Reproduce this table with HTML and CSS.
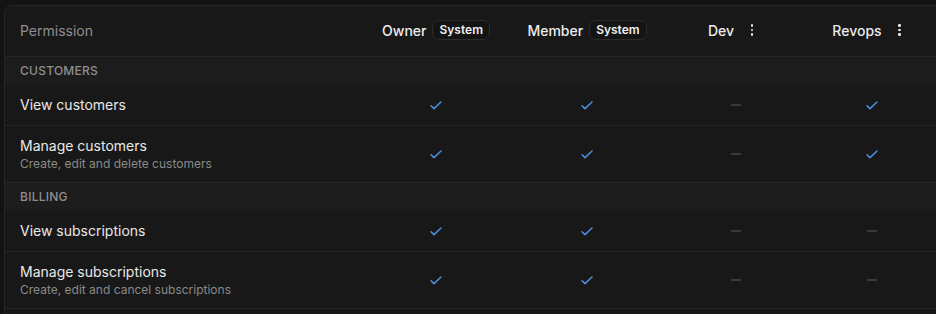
FILE: index.html
```html
<!DOCTYPE html>
<html lang="en">
<head>
<meta charset="utf-8">
<link rel="stylesheet" href="styles.css">
</head>
<body>
<div class="card">
  <div class="row head">
    <div class="cell perm muted">Permission</div>
    <div class="cell col"><span>Owner</span><span class="badge">System</span></div>
    <div class="cell col"><span>Member</span><span class="badge">System</span></div>
    <div class="cell col"><span>Dev</span><span class="kebab"><i></i><i></i><i></i></span></div>
    <div class="cell col"><span>Revops</span><span class="kebab"><i></i><i></i><i></i></span></div>
    <div class="cell"></div>
  </div>

  <div class="section">CUSTOMERS</div>
  <div class="row item">
    <div class="cell perm"><div class="title">View customers</div></div>
    <div class="cell col"><svg class="check" viewBox="0 0 12 9"><path d="M1 4.8 L4 7.6 L11 1"/></svg></div>
    <div class="cell col"><svg class="check" viewBox="0 0 12 9"><path d="M1 4.8 L4 7.6 L11 1"/></svg></div>
    <div class="cell col"><span class="dash"></span></div>
    <div class="cell col"><svg class="check" viewBox="0 0 12 9"><path d="M1 4.8 L4 7.6 L11 1"/></svg></div>
    <div class="cell"></div>
  </div>
  <div class="row item tall">
    <div class="cell perm"><div class="title">Manage customers</div><div class="desc">Create, edit and delete customers</div></div>
    <div class="cell col"><svg class="check" viewBox="0 0 12 9"><path d="M1 4.8 L4 7.6 L11 1"/></svg></div>
    <div class="cell col"><svg class="check" viewBox="0 0 12 9"><path d="M1 4.8 L4 7.6 L11 1"/></svg></div>
    <div class="cell col"><span class="dash"></span></div>
    <div class="cell col"><svg class="check" viewBox="0 0 12 9"><path d="M1 4.8 L4 7.6 L11 1"/></svg></div>
    <div class="cell"></div>
  </div>

  <div class="section">BILLING</div>
  <div class="row item">
    <div class="cell perm"><div class="title">View subscriptions</div></div>
    <div class="cell col"><svg class="check" viewBox="0 0 12 9"><path d="M1 4.8 L4 7.6 L11 1"/></svg></div>
    <div class="cell col"><svg class="check" viewBox="0 0 12 9"><path d="M1 4.8 L4 7.6 L11 1"/></svg></div>
    <div class="cell col"><span class="dash"></span></div>
    <div class="cell col"><span class="dash"></span></div>
    <div class="cell"></div>
  </div>
  <div class="row item tall">
    <div class="cell perm"><div class="title">Manage subscriptions</div><div class="desc">Create, edit and cancel subscriptions</div></div>
    <div class="cell col"><svg class="check" viewBox="0 0 12 9"><path d="M1 4.8 L4 7.6 L11 1"/></svg></div>
    <div class="cell col"><svg class="check" viewBox="0 0 12 9"><path d="M1 4.8 L4 7.6 L11 1"/></svg></div>
    <div class="cell col"><span class="dash"></span></div>
    <div class="cell col"><span class="dash"></span></div>
    <div class="cell"></div>
  </div>
  <div class="row item">
    <div class="cell perm"></div>
  </div>
</div>
</body>
</html>
```
FILE: styles.css
```css
* { box-sizing: border-box; }
html, body { margin: 0; padding: 0; }
body {
  background: #131313;
  font-family: Inter, "Noto Sans", sans-serif;
  color: #e6e6e6;
  overflow: hidden;
  width: 936px;
  height: 314px;
  padding: 5px 0 0 4px;
}
.card {
  width: 980px;
  background: #181818;
  border: 1px solid #262626;
  border-radius: 8px;
  overflow: hidden;
}
.row {
  display: grid;
  grid-template-columns: 355px 152px 150px 148px 124px 1fr;
  border-bottom: 1px solid #262626;
}
.row.head { height: 51px; padding-bottom: 2px; }
.row.item { height: 41px; }
.row.item.tall { height: 57px; }
.cell {
  display: flex;
  align-items: center;
}
.perm {
  padding: 0 16px 0 15px;
  flex-direction: column;
  align-items: flex-start;
  justify-content: center;
}
.head .perm { font-size: 14px; }
.muted { color: #8f8f8f; }
.col {
  justify-content: center;
  gap: 6px;
  font-size: 14px;
  font-weight: 500;
  color: #ececec;
}
.badge {
  font-size: 12px;
  font-weight: 600;
  color: #f0f0f0;
  border: 1px solid #2c2c2c;
  background: #141414;
  border-radius: 7px;
  padding: 1px 6px 2px;
  line-height: 15px;
}
.kebab {
  width: 24px;
  height: 24px;
  display: flex;
  flex-direction: column;
  align-items: center;
  justify-content: center;
  gap: 2px;
}
.kebab i {
  display: block;
  width: 2.5px;
  height: 2.5px;
  background: #e6e6e6;
  border-radius: 50%;
}
.section {
  height: 28px;
  background: #1c1c1c;
  padding: 0 15px 2px;
  display: flex;
  align-items: center;
  font-size: 12px;
  font-weight: 500;
  color: #8f8f8f;
  letter-spacing: 0.25px;
}
.title {
  font-size: 14px;
  color: #e8e8e8;
  line-height: 18px;
}
.desc {
  font-size: 12px;
  color: #8a8a8a;
  line-height: 17px;
}
.check {
  width: 12px;
  height: 9px;
  fill: none;
  stroke: #4a8fe0;
  stroke-width: 1.5;
  stroke-linecap: round;
  stroke-linejoin: round;
}
.dash {
  display: block;
  width: 10px;
  height: 2px;
  background: #3a3a3a;
}
```
